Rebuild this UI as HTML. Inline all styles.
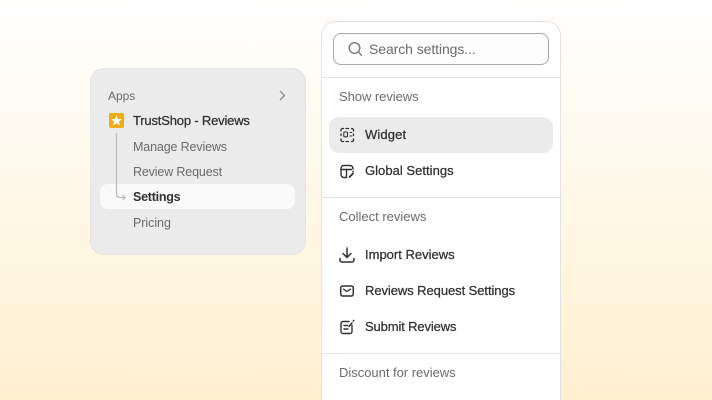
<!DOCTYPE html>
<html><head><meta charset="utf-8"><style>
html,body{margin:0;padding:0;width:712px;height:400px;overflow:hidden}
#r{width:712px;height:400px;position:relative;overflow:hidden;background:linear-gradient(180deg,#fff 0%,#fff9ea 45%,#fff0cf 100%);font-family:"Liberation Sans",sans-serif}
.a{position:absolute;white-space:nowrap;line-height:16px;font-size:13px}
.s{font-size:12.5px}
.g{color:#6b6b6b}.d{color:#303030;-webkit-text-stroke:.25px #303030}
svg{position:absolute;overflow:visible}
.i{fill:none;stroke:#303030;stroke-width:1.4;stroke-linecap:round;stroke-linejoin:round}
</style></head><body><div id="r">
<div style="position:absolute;left:90px;top:68px;width:214px;height:185px;background:#ebebeb;border:1px solid #e3e3e3;border-radius:14px"></div>
<div style="position:absolute;left:100px;top:184px;width:195px;height:25px;background:#fafafa;border-radius:8px"></div>
<div class="a g" style="left:108px;top:88px;font-size:12px;letter-spacing:-.05px">Apps</div>
<svg style="left:0;top:0" width="712" height="400"><path d="M280 91l4.500 4.500-4.500 4.500" fill="none" stroke="#8a8a8a" stroke-width="1.300"/>
<path d="M116.500 133V194q0 3.500 3.500 3.500h5M122.500 195l2.700 2.500-2.700 2.500" fill="none" stroke="#bdbdbd" stroke-width="1.300"/>
<rect x="109" y="113" width="15" height="15" rx="2" fill="#eeac17"/>
<path d="M116.500 115.500l1.500 3.400 3.700.3-2.800 2.400.9 3.600-3.300-1.900-3.300 1.900.9-3.600-2.800-2.400 3.700-.3z" fill="#fff"/></svg>
<div class="a d" style="left:133px;top:113px;letter-spacing:-.18px">TrustShop - Reviews</div>
<div class="a g s" style="left:133px;top:139px;letter-spacing:-.14px">Manage Reviews</div>
<div class="a g s" style="left:133px;top:164px;letter-spacing:-.15px">Review Request</div>
<div class="a d s" style="left:133px;top:189px;font-weight:700;-webkit-text-stroke:0;letter-spacing:-.25px">Settings</div>
<div class="a g s" style="left:133px;top:215px;letter-spacing:-.05px">Pricing</div>

<div style="position:absolute;left:321px;top:21px;width:238px;height:395px;background:#fff;border:1px solid #e3e3e3;border-radius:14px"></div>
<div style="position:absolute;left:333px;top:33px;width:214px;height:30px;background:#fdfdfd;border:1px solid #a8a8a8;border-radius:8px"></div>
<div style="position:absolute;left:322px;top:77px;width:238px;height:1px;background:#e3e3e3"></div>
<div style="position:absolute;left:322px;top:197px;width:238px;height:1px;background:#e3e3e3"></div>
<div style="position:absolute;left:322px;top:353px;width:238px;height:1px;background:#e3e3e3"></div>
<div style="position:absolute;left:329px;top:117px;width:224px;height:36px;background:#ebebeb;border-radius:10px"></div>
<div class="a g" style="left:369px;top:41px;font-size:14px;letter-spacing:-.08px">Search settings...</div>
<div class="a g" style="left:339px;top:89px;letter-spacing:-.05px">Show reviews</div>
<div class="a g" style="left:339px;top:209px;letter-spacing:0">Collect reviews</div>
<div class="a g" style="left:339px;top:365px;letter-spacing:-.02px">Discount for reviews</div>
<div class="a d" style="left:365px;top:127px;letter-spacing:.13px">Widget</div>
<div class="a d" style="left:365px;top:163px;letter-spacing:.03px">Global Settings</div>
<div class="a d" style="left:365px;top:247px;letter-spacing:0">Import Reviews</div>
<div class="a d" style="left:365px;top:283px;letter-spacing:-.07px">Reviews Request Settings</div>
<div class="a d" style="left:365px;top:319px;letter-spacing:-.13px">Submit Reviews</div>
<svg style="left:0;top:0" width="712" height="400">
<g fill="none" stroke="#7a7a7a" stroke-width="1.400" stroke-linecap="round"><circle cx="354.500" cy="48" r="5.300"/><path d="M358.500 52l3 3.300"/></g>
<g class="i">
<path d="M341 131v-1a1.500 1.500 0 0 1 1.500-1.500h1M346 128.500h2.500M351.500 128.500h.5a1.500 1.500 0 0 1 1.500 1.500v1M341 139v1a1.500 1.500 0 0 0 1.500 1.500h1M346 141.500h2.500M351.500 141.500h.5a1.500 1.500 0 0 0 1.500-1.500v-1M341 134v1.500M353.500 134v1.500" stroke-width="1.300"/>
<rect x="343.800" y="132" width="3.700" height="4.800" rx=".8" stroke-width="1.100"/><path d="M350 132.500h1.800M350 136h1.800" stroke-width="1.100"/>
<path d="M346 177.500h-2a3 3 0 0 1-3-3v-6a3 3 0 0 1 3-3h6a3 3 0 0 1 3 3v.5M341 169.500h10.500M346.500 169.500v8"/><path d="M353 171.500v.1M349.500 177l3.500-3.500" stroke-width="1.700"/>
<path d="M347 248v9.500M343 253.500l4 4 4-4M340 258.500v1.500a2 2 0 0 0 2 2h10a2 2 0 0 0 2-2v-1.500" stroke-width="1.500"/>
<rect x="340.700" y="286" width="12.600" height="10" rx="2" stroke-width="1.500"/><path d="M343.500 289.200l3.500 2.300 3.500-2.300" stroke-width="1.300"/>
<path d="M349 321.500h-6a2 2 0 0 0-2 2v8a2 2 0 0 0 2 2h7a2 2 0 0 0 2-2v-6M344 325.500h3.500M344 329h4" stroke-width="1.400"/><path d="M349 326.500l3-3.500M353.300 321l.4-.6" stroke-width="1.500"/>
</g></svg>
</div></body></html>
